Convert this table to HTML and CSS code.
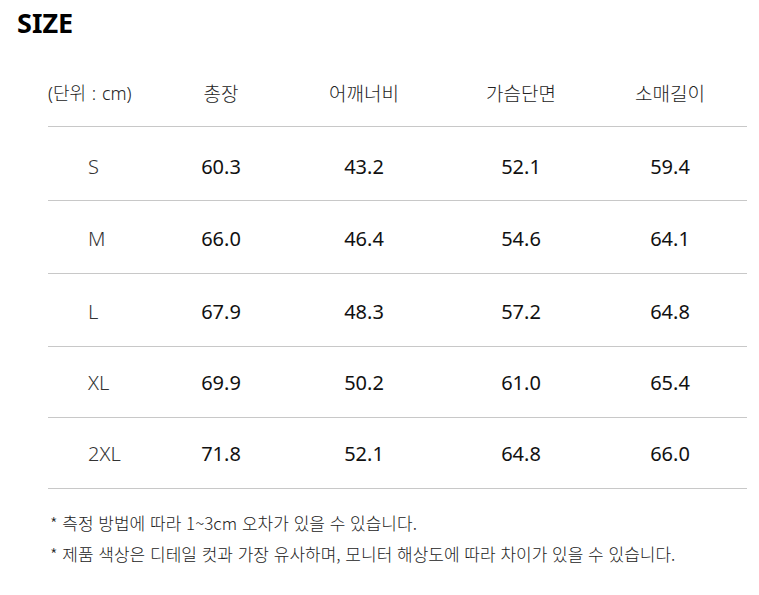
FILE: index.html
```html
<!DOCTYPE html>
<html lang="ko">
<head>
<meta charset="utf-8">
<link rel="stylesheet" href="styles.css">
</head>
<body>
<h2 class="title">SIZE</h2>
<div class="table">
  <div class="row head">
    <div class="cell unit">(단위 : cm)</div>
    <div class="cell">총장</div>
    <div class="cell">어깨너비</div>
    <div class="cell">가슴단면</div>
    <div class="cell">소매길이</div>
  </div>
  <div class="row">
    <div class="cell size">S</div>
    <div class="cell">60.3</div>
    <div class="cell">43.2</div>
    <div class="cell">52.1</div>
    <div class="cell">59.4</div>
  </div>
  <div class="row">
    <div class="cell size">M</div>
    <div class="cell">66.0</div>
    <div class="cell">46.4</div>
    <div class="cell">54.6</div>
    <div class="cell">64.1</div>
  </div>
  <div class="row">
    <div class="cell size">L</div>
    <div class="cell">67.9</div>
    <div class="cell">48.3</div>
    <div class="cell">57.2</div>
    <div class="cell">64.8</div>
  </div>
  <div class="row">
    <div class="cell size">XL</div>
    <div class="cell">69.9</div>
    <div class="cell">50.2</div>
    <div class="cell">61.0</div>
    <div class="cell">65.4</div>
  </div>
  <div class="row">
    <div class="cell size">2XL</div>
    <div class="cell">71.8</div>
    <div class="cell">52.1</div>
    <div class="cell">64.8</div>
    <div class="cell">66.0</div>
  </div>
</div>
<ul class="notes">
  <li>* 측정 방법에 따라 1~3cm 오차가 있을 수 있습니다.</li>
  <li>* 제품 색상은 디테일 컷과 가장 유사하며, 모니터 해상도에 따라 차이가 있을 수 있습니다.</li>
</ul>
</body>
</html>
```
FILE: styles.css
```css
html, body {
  margin: 0;
  padding: 0;
  background: #fff;
}
body {
  font-family: "Noto Sans", "Noto Sans CJK KR", sans-serif;
  color: #111;
}
.title {
  margin: 0;
  padding: 5px 0 0 17px;
  font-size: 27px;
  line-height: 36px;
  font-weight: 700;
  color: #000;
}
.table {
  margin: 17px 12px 0 48px;
}
.row {
  display: grid;
  grid-template-columns: 92px 162px 124px 190px 108px 1fr;
  height: 73px;
  align-items: center;
  border-bottom: 1px solid #c8c8c8;
  box-sizing: border-box;
}
.row.head {
  height: 69px;
}
.row:nth-child(2) {
  height: 74px;
  padding-top: 5px;
}
.row:nth-child(3),
.row:nth-child(4) {
  padding-top: 3px;
}
.row:nth-child(5),
.row:nth-child(6) {
  height: 71px;
}
.cell {
  text-align: center;
  font-size: 20px;
  color: #111;
  white-space: nowrap;
}
.head .cell {
  font-family: "Noto Sans CJK KR", sans-serif;
  font-weight: 300;
  font-size: 19px;
  color: #222;
}
.head .cell.unit {
  font-family: "Noto Sans", "Noto Sans CJK KR", sans-serif;
  font-size: 18px;
  word-spacing: 1px;
  text-align: left;
  color: #222;
}
.cell.size {
  font-weight: 300;
  color: #333;
  text-align: left;
  padding-left: 40px;
}
.notes {
  list-style: none;
  margin: 18px 0 0 50px;
  padding: 0;
}
.notes li {
  font-family: "Noto Sans CJK KR", sans-serif;
  font-weight: 300;
  font-size: 17px;
  line-height: 31px;
  color: #222;
}
```
